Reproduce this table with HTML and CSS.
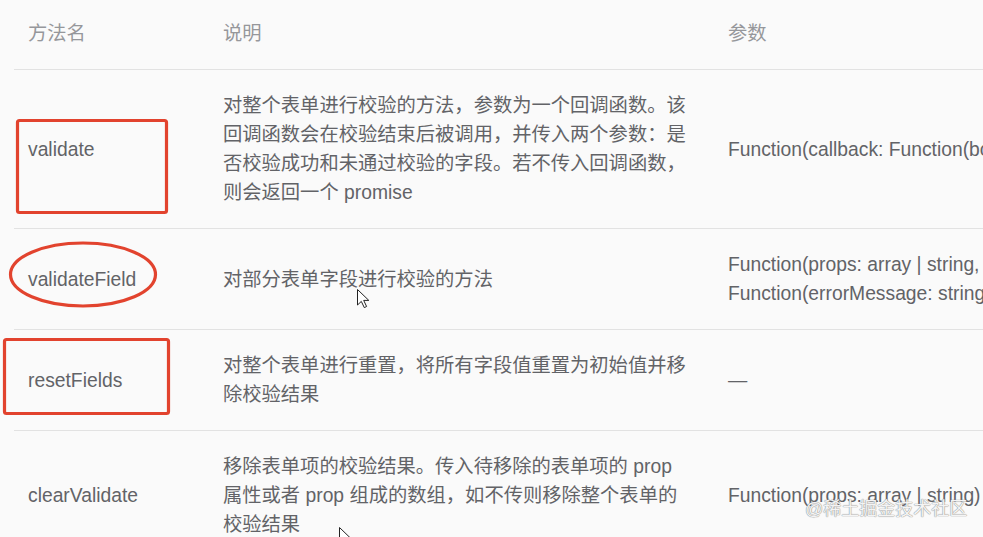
FILE: index.html
```html
<!DOCTYPE html>
<html lang="zh-CN">
<head>
<meta charset="utf-8">
<title>Form Methods</title>
<link rel="stylesheet" href="styles.css">
</head>
<body>
<div class="page">
  <table class="methods">
    <colgroup>
      <col class="c-name">
      <col class="c-desc">
      <col class="c-param">
    </colgroup>
    <thead>
      <tr><th>方法名</th><th>说明</th><th>参数</th></tr>
    </thead>
    <tbody>
      <tr>
        <td>validate</td>
        <td>对整个表单进行校验的方法，参数为一个回调函数。该回调函数会在校验结束后被调用，并传入两个参数：是否校验成功和未通过校验的字段。若不传入回调函数，则会返回一个 promise</td>
        <td class="nowrap">Function(callback: Function(boolean, object))</td>
      </tr>
      <tr>
        <td>validateField</td>
        <td>对部分表单字段进行校验的方法</td>
        <td class="nowrap">Function(props: array | string, callback: Function<br>Function(errorMessage: string))</td>
      </tr>
      <tr>
        <td>resetFields</td>
        <td>对整个表单进行重置，将所有字段值重置为初始值并移除校验结果</td>
        <td>—</td>
      </tr>
      <tr>
        <td>clearValidate</td>
        <td>移除表单项的校验结果。传入待移除的表单项的 prop 属性或者 prop 组成的数组，如不传则移除整个表单的校验结果</td>
        <td class="nowrap">Function(props: array | string)</td>
      </tr>
    </tbody>
  </table>

  <svg class="marks" width="983" height="537" viewBox="0 0 983 537" xmlns="http://www.w3.org/2000/svg">
    <rect x="17.5" y="120.5" width="149" height="92" rx="2" fill="none" stroke="#e2432e" stroke-width="3.2"/>
    <ellipse cx="83" cy="274.5" rx="72.5" ry="31.5" fill="none" stroke="#e2432e" stroke-width="3.2"/>
    <rect x="4.5" y="339.5" width="164" height="74" rx="2" fill="none" stroke="#e2432e" stroke-width="3.2"/>
    <path d="M357.5 289.5 L357.5 305 L361.3 301.4 L364.3 307.6 L366.6 306.5 L363.7 300.4 L368.8 300.4 Z" fill="#fff" stroke="#222" stroke-width="1" stroke-linejoin="round"/>
    <path d="M339.5 527.5 L339.5 543 L343.3 539.4 L346.3 545.6 L348.6 544.5 L345.7 538.4 L350.8 538.4 Z" fill="#fff" stroke="#222" stroke-width="1" stroke-linejoin="round"/>
  </svg>

  <div class="watermark">@稀土掘金技术社区</div>
</div>
</body>
</html>
```

FILE: styles.css
```css
html, body {
  margin: 0;
  padding: 0;
  background: #fafafa;
}

.page {
  position: relative;
  width: 983px;
  height: 537px;
  overflow: hidden;
  padding-left: 14px;
  box-sizing: border-box;
  font-family: "Liberation Sans", "Noto Sans CJK SC", sans-serif;
  font-size: 19.3px;
  line-height: 29px;
  color: #626367;
}

.methods {
  border-collapse: collapse;
  table-layout: fixed;
  width: 1160px;
}

.c-name { width: 195px; }
.c-desc { width: 505px; }

.methods th,
.methods td {
  text-align: left;
  vertical-align: middle;
  padding: 21px 24px 21px 14px;
  border-bottom: 1px solid #e2e2e2;
}

.methods th {
  font-weight: normal;
  color: #96979b;
  padding-top: 19px;
  padding-bottom: 21px;
}

.nowrap {
  white-space: nowrap;
}

.marks {
  position: absolute;
  left: 0;
  top: 0;
  pointer-events: none;
}

.watermark {
  position: absolute;
  left: 805px;
  top: 497px;
  font-size: 18px;
  line-height: 24px;
  color: #f4f4f4;
  text-shadow: 0 0 1px #8a8a8a, 0 0 1px #8a8a8a;
  white-space: nowrap;
}
```
